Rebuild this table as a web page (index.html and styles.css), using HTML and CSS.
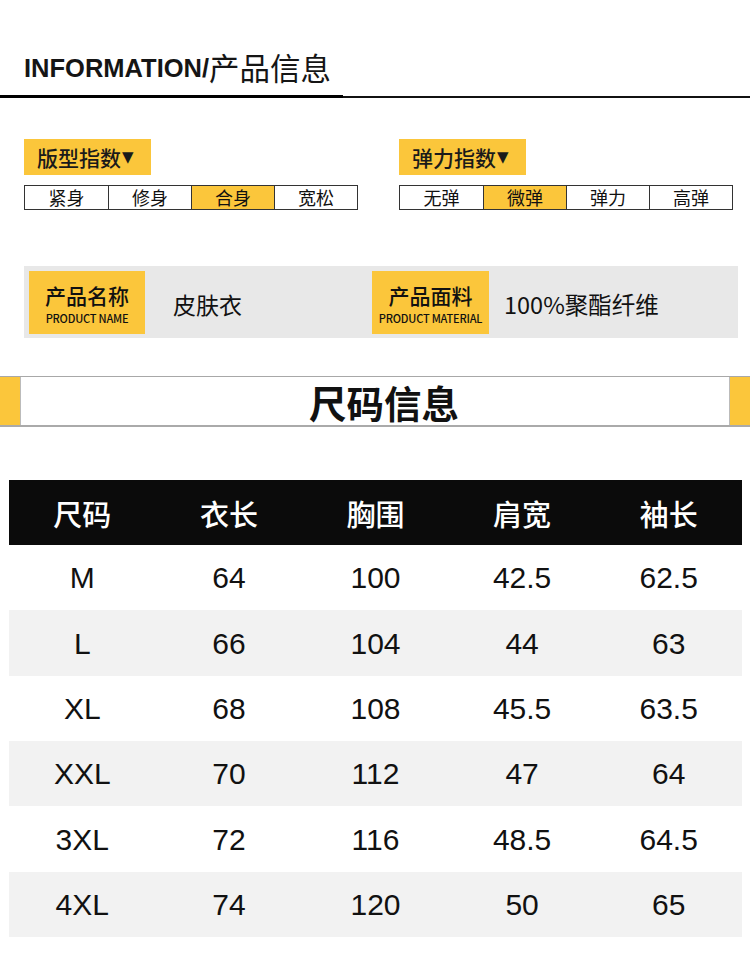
FILE: index.html
```html
<!DOCTYPE html>
<html lang="zh">
<head>
<meta charset="utf-8">
<link rel="stylesheet" href="styles.css">
</head>
<body>
<div class="page">
  <h1 class="title"><span class="title-en">INFORMATION/</span><span class="title-cn">产品信息</span></h1>
  <div class="rule"><div class="rule-thick"></div><div class="rule-thin"></div></div>

  <div class="indices">
    <div class="index">
      <div class="badge">版型指数<span class="tri">▼</span></div>
      <div class="scale">
        <div class="cell">紧身</div>
        <div class="cell">修身</div>
        <div class="cell on">合身</div>
        <div class="cell">宽松</div>
      </div>
    </div>
    <div class="index">
      <div class="badge">弹力指数<span class="tri">▼</span></div>
      <div class="scale">
        <div class="cell">无弹</div>
        <div class="cell on">微弹</div>
        <div class="cell">弹力</div>
        <div class="cell">高弹</div>
      </div>
    </div>
  </div>

  <div class="info">
    <div class="label"><div class="label-cn">产品名称</div><div class="label-en">PRODUCT NAME</div></div>
    <div class="value v1">皮肤衣</div>
    <div class="label"><div class="label-cn">产品面料</div><div class="label-en">PRODUCT MATERIAL</div></div>
    <div class="value v2">100%聚酯纤维</div>
  </div>

  <div class="banner">
    <div class="banner-side"></div>
    <div class="banner-mid">尺码信息</div>
    <div class="banner-side"></div>
  </div>

  <div class="table">
    <div class="row head"><div>尺码</div><div>衣长</div><div>胸围</div><div>肩宽</div><div>袖长</div></div>
    <div class="row"><div>M</div><div>64</div><div>100</div><div>42.5</div><div>62.5</div></div>
    <div class="row alt"><div>L</div><div>66</div><div>104</div><div>44</div><div>63</div></div>
    <div class="row"><div>XL</div><div>68</div><div>108</div><div>45.5</div><div>63.5</div></div>
    <div class="row alt"><div>XXL</div><div>70</div><div>112</div><div>47</div><div>64</div></div>
    <div class="row"><div>3XL</div><div>72</div><div>116</div><div>48.5</div><div>64.5</div></div>
    <div class="row alt"><div>4XL</div><div>74</div><div>120</div><div>50</div><div>65</div></div>
  </div>
</div>
</body>
</html>
```

FILE: styles.css
```css
* { box-sizing: border-box; }
html, body { margin: 0; padding: 0; background: #fff; }
body {
  width: 750px;
  font-family: "Liberation Sans", "Noto Sans CJK SC", sans-serif;
  color: #111;
}
.page { padding-top: 48px; }

.title {
  margin: 0 0 0 24px;
  height: 40px;
  display: flex;
  align-items: center;
  font-weight: normal;
  color: #151515;
}
.title-en {
  font-family: "Liberation Sans", sans-serif;
  font-weight: bold;
  font-size: 25.5px;
}
.title-cn {
  font-family: "Noto Sans CJK SC", sans-serif;
  font-size: 30.5px;
  font-weight: 400;
  margin-top: -2px;
}

.rule { display: flex; align-items: flex-start; margin-top: 7px; height: 3px; }
.rule-thick { width: 343px; height: 3px; background: #000; }
.rule-thin { flex: 1; height: 1.5px; margin-top: 1px; background: #111; }

.indices {
  display: grid;
  grid-template-columns: 334px 334px;
  column-gap: 41px;
  padding-left: 24px;
  margin-top: 41px;
}
.badge {
  width: 127px;
  height: 36px;
  background: #fbc63b;
  font-family: "Noto Sans CJK SC", sans-serif;
  font-size: 21px;
  font-weight: 500;
  color: #1a1a1a;
  display: flex;
  align-items: center;
  padding-left: 13px;
}
.tri { font-size: 15px; margin-left: 1px; font-family: "DejaVu Sans", sans-serif; }
.scale {
  margin-top: 10px;
  display: grid;
  grid-template-columns: repeat(4, 1fr);
  border: 1px solid #333;
  height: 25px;
}
.cell {
  border-left: 1px solid #333;
  display: flex;
  align-items: center;
  justify-content: center;
  font-family: "Noto Sans CJK SC", sans-serif;
  font-size: 18px;
  line-height: 18px;
  padding-bottom: 1px;
  color: #111;
}
.cell:first-child { border-left: none; }
.cell.on { background: #fbc63b; }

.info {
  margin: 56px 0 0 24px;
  width: 714px;
  height: 72px;
  background: #e8e8e8;
  padding: 5px;
  display: grid;
  grid-template-columns: 116px 227px 117px 1fr;
}
.label {
  background: #fbc63b;
  height: 63px;
  display: flex;
  flex-direction: column;
  align-items: center;
  justify-content: center;
  font-family: "Noto Sans CJK SC", sans-serif;
  color: #111;
  padding-top: 2px;
}
.label-cn { font-size: 21px; line-height: 24px; font-weight: 500; }
.label-en { font-size: 11px; line-height: 14px; font-weight: 500; margin-top: 4px; letter-spacing: -0.2px; }
.value {
  display: flex;
  align-items: center;
  font-family: "Noto Sans CJK SC", sans-serif;
  font-size: 23px;
  color: #111;
  padding-top: 3px;
}
.v1 { padding-left: 28px; }
.v2 { padding-left: 15px; font-size: 23.5px; }

.banner {
  margin-top: 38px;
  height: 51px;
  display: flex;
  border-top: 1px solid #a8a8a8;
  border-bottom: 2px solid #aaa;
}
.banner-side { width: 20px; background: #fbc63b; }
.banner-mid {
  flex: 1;
  border-left: 1px solid #bbb;
  border-right: 1px solid #bbb;
  display: flex;
  align-items: center;
  justify-content: center;
  padding-left: 18px;
  font-family: "Noto Sans CJK SC", sans-serif;
  font-weight: bold;
  font-size: 37.5px;
  color: #111;
}

.table { margin: 53px 0 0 9px; width: 733px; }
.row {
  display: grid;
  grid-template-columns: repeat(5, 1fr);
  height: 65.35px;
  align-items: center;
  text-align: center;
  font-family: "Liberation Sans", sans-serif;
  font-size: 30px;
  color: #111;
  padding-top: 1px;
}
.row.alt { background: #f2f2f2; }
.row.head {
  height: 65px;
  padding-top: 0;
  background: #0b0b0b;
  color: #fff;
  font-family: "Noto Sans CJK SC", sans-serif;
  font-size: 29px;
  font-weight: 500;
}
```
